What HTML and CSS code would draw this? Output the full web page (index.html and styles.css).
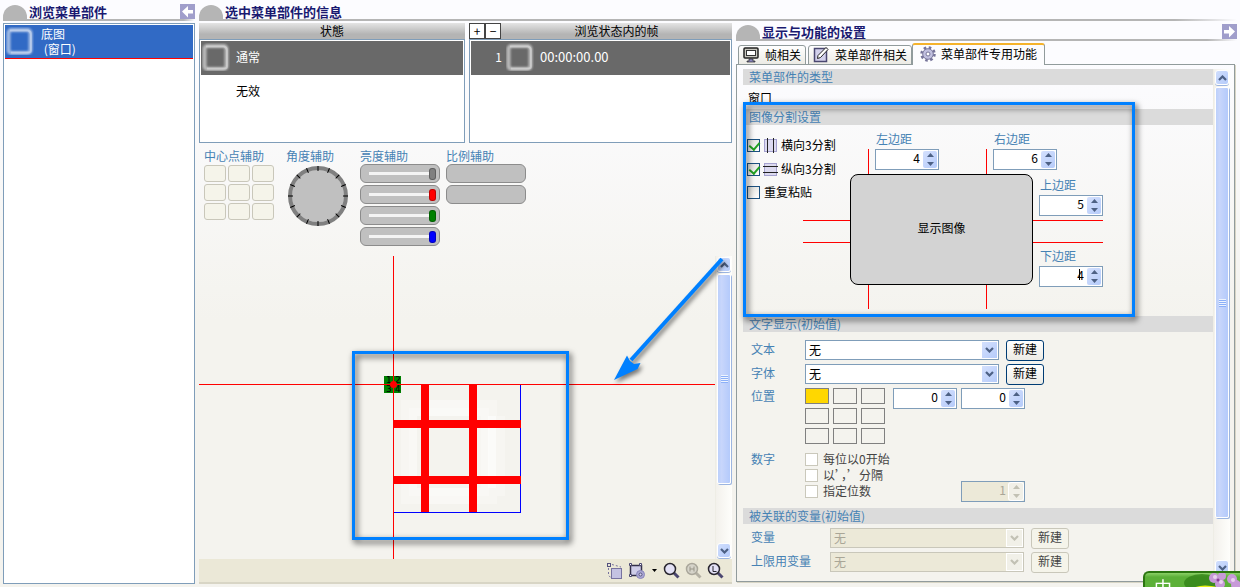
FILE: index.html
```html
<!DOCTYPE html>
<html lang="zh-CN">
<head>
<meta charset="utf-8">
<title>菜单部件编辑器</title>
<link rel="stylesheet" href="styles.css">
</head>
<body>
<svg class="defs" width="0" height="0" aria-hidden="true">
  <defs>
    <symbol id="chev-up" viewBox="0 0 9 6"><path d="M1 5 4.500 1.500 8 5" fill="none" stroke="#4d6185" stroke-width="2.200"/></symbol>
    <symbol id="chev-down" viewBox="0 0 9 6"><path d="M1 1 4.500 4.500 8 1" fill="none" stroke="currentColor" stroke-width="2.200"/></symbol>
    <symbol id="tri-up" viewBox="0 0 7 4"><path d="M0 4 3.500 0 7 4z" fill="currentColor"/></symbol>
    <symbol id="tri-down" viewBox="0 0 7 4"><path d="M0 0 3.500 4 7 0z" fill="currentColor"/></symbol>
    <filter id="soft" x="-20%" y="-20%" width="140%" height="140%"><feGaussianBlur stdDeviation="0.800"/></filter>
    <symbol id="frame-part" viewBox="0 0 28 28">
      <rect x="2.500" y="3" width="22" height="23" rx="3" fill="none" stroke="#fff" stroke-width="4" opacity=".55" filter="url(#soft)"/>
      <path d="M4 3.500h18q3 1 3 4v16q0 2-2 2H5" fill="none" stroke="#fff" stroke-width="2" opacity=".3"/>
    </symbol>
  </defs>
</svg>

<div class="app">
  <aside class="parts">
    <header class="head">
      <span class="dome"></span><h2>浏览菜单部件</h2>
      <button class="arrow" aria-label="收起"><svg width="15" height="15"><path d="M2 7.500 8 2v4h5v3.500H8v4z" fill="#fff"/></svg></button>
    </header>
    <ul class="list part-list">
      <li class="part selected"><svg width="28" height="28"><use href="#frame-part"/></svg><span>底图<br>&nbsp;(窗口)</span></li>
    </ul>
  </aside>

  <main class="detail">
    <header class="head"><span class="dome"></span><h2>选中菜单部件的信息</h2></header>
    <div class="columns">

      <section class="editor">
        <div class="lists">
          <div class="pane">
            <div class="caption">状態</div>
            <ul class="list">
              <li class="row active"><svg width="28" height="28"><use href="#frame-part"/></svg><span>通常</span></li>
              <li class="row"><i class="blank"></i><span>无效</span></li>
            </ul>
          </div>
          <div class="pane">
            <div class="caption"><span class="pm"><button>+</button><button>−</button></span><span class="title">浏览状态内的帧</span></div>
            <ul class="list">
              <li class="row active"><b class="num">1</b><svg width="28" height="28"><use href="#frame-part"/></svg><span class="time">00:00:00.00</span></li>
            </ul>
          </div>
        </div>

        <div class="aids">
          <div class="aid"><h3>中心点辅助</h3>
            <div class="centers"><button aria-label="左上"></button><button aria-label="上"></button><button aria-label="右上"></button><button aria-label="左"></button><button aria-label="中"></button><button aria-label="右"></button><button aria-label="左下"></button><button aria-label="下"></button><button aria-label="右下"></button></div>
          </div>
          <div class="aid angle"><h3>角度辅助</h3>
            <svg class="dial" width="60" height="60" viewBox="-30 -30 60 60">
              <circle r="28" fill="#c0c0c0" stroke="#808080" stroke-width="4"/>
              <g stroke="#000"><path id="tick" d="M0-30V-25M0 25V30M-30 0H-25M25 0H30"/><use href="#tick" transform="rotate(22.500)"/><use href="#tick" transform="rotate(45)"/><use href="#tick" transform="rotate(67.500)"/></g>
            </svg>
          </div>
          <div class="pair">
            <div class="aid"><h3>亮度辅助</h3>
              <div class="bars">
                <label class="bar gray"><input type="range" value="100" aria-label="亮度"></label>
                <label class="bar red"><input type="range" value="100" aria-label="红"></label>
                <label class="bar green"><input type="range" value="100" aria-label="绿"></label>
                <label class="bar blue"><input type="range" value="100" aria-label="蓝"></label>
              </div>
            </div>
            <div class="aid"><h3>比例辅助</h3><div class="bars"><div class="bar"></div><div class="bar"></div></div></div>
          </div>
        </div>

        <div class="stage">
          <svg class="scene">
            <g transform="translate(194 128)">
              <g fill="#fff">
                <path opacity=".25" d="M8 16h96v104H8zM24 32v72h64V32z" fill-rule="evenodd"/>
                <path opacity=".25" d="M16 24h80v88H16zM24 32v72h56V32z" fill-rule="evenodd"/>
                <path opacity=".5" d="M95 32h8v72h-8z"/>
                <path opacity=".25" d="M36 16h40v16H36zM36 104h40v16H36zM104 32h8v80h-8z"/>
              </g>
              <path d="M0 128.500H128M127.500 128V0" transform="translate(0 0)" fill="none" stroke="#00f"/>
              <path d="M28 0h8v128h-8zM76 0h8v128h-8zM0 36h128v8H0zM0 92h128v8H0z" fill="red"/>
              <rect x="-9" y="-8" width="17" height="17" fill="#008000"/>
              <g class="quad"><text x="-7" y="-1">1</text><text x="2" y="-1">2</text><text x="-7" y="8">3</text><text x="2" y="8">4</text></g>
            </g>
            <path d="M194.500 0V900M0 128.500H3000" stroke="red"/>
            <circle cx="194.500" cy="128.500" r="3.500" fill="red"/>
            <rect class="mark" x="154.500" y="96.500" width="214" height="186"/>
          </svg>
          <div class="scroll">
            <button aria-label="向上"><svg width="9" height="6"><use href="#chev-up"/></svg></button>
            <div class="track"><div class="thumb stage-thumb"></div><div class="rest stage-rest"></div></div>
            <button aria-label="向下"><svg width="9" height="6"><use href="#chev-down"/></svg></button>
          </div>
          <svg class="pointer" width="130" height="140"><path d="M118 3 27 104" stroke="#0080ff" stroke-width="4"/><path d="M10 124 23 99.500l3 5.500 4 3 6.500-1-3 6z" fill="#0080ff"/></svg>
        </div>

        <div class="toolbar">
          <button aria-label="移动"><svg width="18" height="18"><rect x="5.500" y="6.500" width="10" height="10" fill="#c4c2e2" stroke="#77729f"/><rect x="1.500" y="1.500" width="3" height="3" fill="none" stroke="#55527f"/><path d="M6 2.500 15 5M2.500 6V13L5 16" fill="none" stroke="#77729f" stroke-dasharray="2 2"/></svg></button>
          <button aria-label="变形"><svg width="18" height="18"><rect x="2.500" y="3.500" width="11" height="10" fill="#cfcde9" stroke="#33304a" stroke-width="1.500"/><g fill="#fff" stroke="#4a4770"><path d="M1.500 1.500h2v2h-2zM11.500 1.500h2v2h-2zM1.500 12.500h2v2h-2z"/></g><circle cx="12.500" cy="12.500" r="4" fill="#aaa7d3" stroke="#8a86bb"/><circle cx="12.500" cy="12.500" r="1.500" fill="#d8d6ee" stroke="#55527f"/></svg></button>
          <button class="drop" aria-label="更多"><svg width="5" height="3"><path d="M0 0h5L2.500 3z"/></svg></button>
          <button aria-label="缩放"><svg width="18" height="18"><path d="m10.500 10.500 5 5" stroke="#4b4770" stroke-width="3"/><circle cx="7" cy="7" r="5.500" fill="#e3e1f6" stroke="#29262f" stroke-width="1.500"/></svg></button>
          <button aria-label="半倍" disabled><svg width="18" height="18"><path d="m10.500 10.500 5 5" stroke="#b4b1a4" stroke-width="3"/><circle cx="7" cy="7" r="5.500" fill="#d6d4ca" stroke="#aaa79b" stroke-width="1.500"/><path d="M5 4.500v5M9 4.500v5M5 7h4" stroke="#989588"/></svg></button>
          <button aria-label="放大"><svg width="18" height="18"><path d="m10.500 10.500 5 5" stroke="#4b4770" stroke-width="3"/><circle cx="7" cy="7" r="5.500" fill="#e3e1f6" stroke="#29262f" stroke-width="1.500"/><path d="M6 4v5.500h3.500" fill="none" stroke="#29262f"/></svg></button>
        </div>
      </section>

      <section class="settings">
        <header class="head">
          <span class="dome"></span><h2>显示与功能的设置</h2>
          <button class="arrow" aria-label="展开"><svg width="15" height="15"><path d="M13 7.500 7 2v4H2v3.500h5v4z" fill="#fff"/></svg></button>
        </header>
        <nav class="tabs">
          <button class="tab"><svg width="16" height="16"><rect x="1" y="1" width="14" height="10" rx="1" fill="#c9c8c0" stroke="#222" stroke-width="1.500"/><rect x="3.500" y="3.500" width="9" height="5" fill="#fff" stroke="#333"/><path d="M6 12h4v2h2v1H4v-1h2z" fill="#8c88c2" stroke="#222" stroke-width=".7"/></svg>帧相关</button>
          <button class="tab"><svg width="16" height="16"><rect x="1.500" y="1.500" width="12" height="13" fill="#d3d1ec" stroke="#4a4770" stroke-width="1.500"/><path d="m5 8.500 8-8 2 2-7.500 8-3 1z" fill="#fff" stroke="#222"/></svg>菜单部件相关</button>
          <button class="tab current"><svg width="16" height="16" viewBox="-8 -8 16 16"><circle r="6.500" fill="none" stroke="#77759a" stroke-width="2.500" stroke-dasharray="2.550 2.550"/><circle r="5.300" fill="#c1c0df" stroke="#77759a"/><circle r="2" fill="#fff" stroke="#77759a"/></svg>菜单部件专用功能</button>
        </nav>
        <div class="sheet">
          <div class="form">
            <section>
              <h3 class="band">菜单部件的类型</h3>
              <p class="kind">窗口</p>
            </section>

            <section class="split">
              <h3 class="band">图像分割设置</h3>
              <div class="split-body">
                <div class="checks">
                  <label><input type="checkbox" checked><svg width="15" height="15"><rect x="1.500" y="1.500" width="12" height="12" fill="#dcdaf0" stroke="#a5a2cf"/><path d="M4.500 0v15M10.500 0v15" stroke="#222"/></svg>横向3分割</label>
                  <label><input type="checkbox" checked><svg width="15" height="15"><rect x="1.500" y="1.500" width="12" height="12" fill="#dcdaf0" stroke="#a5a2cf"/><path d="M0 4.500h15M0 10.500h15" stroke="#222"/></svg>纵向3分割</label>
                  <label class="plain"><input type="checkbox"><span>重复粘贴</span></label>
                  <div class="lead"></div>
                </div>
                <div class="diagram">
                  <div class="above">
                    <div class="field"><label for="ml">左边距</label><span class="spin"><input id="ml" value="4"><span class="steps"><button aria-label="加"><svg width="7" height="4"><use href="#tri-up"/></svg></button><button aria-label="减"><svg width="7" height="4"><use href="#tri-down"/></svg></button></span></span></div>
                    <div class="field"><label for="mr">右边距</label><span class="spin"><input id="mr" value="6"><span class="steps"><button aria-label="加"><svg width="7" height="4"><use href="#tri-up"/></svg></button><button aria-label="减"><svg width="7" height="4"><use href="#tri-down"/></svg></button></span></span></div>
                  </div>
                  <div class="preview">显示图像</div>
                  <div class="beside">
                    <div class="field"><label for="mt">上边距</label><span class="spin"><input id="mt" value="5"><span class="steps"><button aria-label="加"><svg width="7" height="4"><use href="#tri-up"/></svg></button><button aria-label="减"><svg width="7" height="4"><use href="#tri-down"/></svg></button></span></span></div>
                    <div class="field"><label for="mb">下边距</label><span class="spin editing"><input id="mb" value="4"><span class="steps"><button aria-label="加"><svg width="7" height="4"><use href="#tri-up"/></svg></button><button aria-label="减"><svg width="7" height="4"><use href="#tri-down"/></svg></button></span></span></div>
                  </div>
                </div>
              </div>
              <div class="highlight"></div>
            </section>

            <section class="text">
              <h3 class="band">文字显示(初始值)</h3>
              <div class="line"><label class="name" for="txt">文本</label><span class="combo"><select id="txt"><option>无</option></select><i><svg width="9" height="6"><use href="#chev-down"/></svg></i></span><button class="new">新建</button></div>
              <div class="line"><label class="name" for="fnt">字体</label><span class="combo"><select id="fnt"><option>无</option></select><i><svg width="9" height="6"><use href="#chev-down"/></svg></i></span><button class="new">新建</button></div>
              <div class="place">
                <span class="name">位置</span>
                <div class="anchors"><button class="on" aria-label="左上"></button><button aria-label="上"></button><button aria-label="右上"></button><button aria-label="左"></button><button aria-label="中"></button><button aria-label="右"></button><button aria-label="左下"></button><button aria-label="下"></button><button aria-label="右下"></button></div>
                <span class="spin"><input value="0" aria-label="X"><span class="steps"><button aria-label="加"><svg width="7" height="4"><use href="#tri-up"/></svg></button><button aria-label="减"><svg width="7" height="4"><use href="#tri-down"/></svg></button></span></span>
                <span class="spin"><input value="0" aria-label="Y"><span class="steps"><button aria-label="加"><svg width="7" height="4"><use href="#tri-up"/></svg></button><button aria-label="减"><svg width="7" height="4"><use href="#tri-down"/></svg></button></span></span>
              </div>
              <div class="digits">
                <span class="name">数字</span>
                <div class="options">
                  <label><input type="checkbox" disabled>每位以0开始</label>
                  <label><input type="checkbox" disabled>以’，’分隔</label>
                  <label><input type="checkbox" disabled>指定位数</label>
                </div>
                <span class="spin off"><input value="1" aria-label="位数" disabled><span class="steps"><button aria-label="加" disabled><svg width="7" height="4"><use href="#tri-up"/></svg></button><button aria-label="减" disabled><svg width="7" height="4"><use href="#tri-down"/></svg></button></span></span>
              </div>
            </section>

            <section class="vars">
              <h3 class="band">被关联的变量(初始值)</h3>
              <div class="line"><label class="name" for="var">变量</label><span class="combo off"><select id="var" disabled><option>无</option></select><i><svg width="9" height="6"><use href="#chev-down"/></svg></i></span><button class="new" disabled>新建</button></div>
              <div class="line"><label class="name" for="lim">上限用变量</label><span class="combo off"><select id="lim" disabled><option>无</option></select><i><svg width="9" height="6"><use href="#chev-down"/></svg></i></span><button class="new" disabled>新建</button></div>
            </section>
          </div>
          <div class="scroll">
            <button aria-label="向上"><svg width="9" height="6"><use href="#chev-up"/></svg></button>
            <div class="track"><div class="thumb sheet-thumb"></div><div class="rest sheet-rest"></div></div>
            <button aria-label="向下"><svg width="9" height="6"><use href="#chev-down"/></svg></button>
          </div>
        </div>
      </section>
    </div>
  </main>
</div>

<div class="ime"><span>中</span>
  <svg width="60" height="16"><ellipse cx="22" cy="10" rx="18" ry="9" fill="#2c7d12" opacity=".7"/><path d="M12 16q8-6 26-2v2z" fill="#e8f01a"/><path d="M38 2l4 8-6 4z" fill="#3f9a20"/><g fill="#c79ad8"><circle cx="34" cy="5" r="5"/><circle cx="42" cy="3" r="4"/><circle cx="40" cy="11" r="5"/><circle cx="52" cy="6" r="5"/><circle cx="56" cy="12" r="5"/></g><g fill="#ead2f0"><circle cx="35" cy="4" r="2"/><circle cx="41" cy="9" r="2"/><circle cx="53" cy="7" r="2"/></g><circle cx="38" cy="7" r="1.500" fill="#8b3f9b"/></svg>
</div>
</body>
</html>
```

FILE: styles.css
```css
* { box-sizing: border-box; }

body {
  margin: 0;
  min-height: 100vh;
  font: 12px/16px "Noto Sans CJK SC", "Liberation Sans", sans-serif;
  color: #000;
  background: linear-gradient(#fcfcff, #fcfcff 60px, #f4f3ee 320px);
}

h2, h3, p, ul { margin: 0; padding: 0; font-size: inherit; font-weight: normal; list-style: none; }
button, input, select { font: inherit; margin: 0; padding: 0; color: inherit; }
svg { display: block; flex: none; }
.defs { position: absolute; }

.app { display: flex; gap: 4px; min-height: 100vh; padding: 4px 3px 3px; }
.parts { display: flex; flex-direction: column; gap: 2px; flex: none; width: 192px; }
.detail { display: flex; flex-direction: column; gap: 2px; flex: 1; min-width: 0; }
.columns { display: grid; grid-template-columns: minmax(0, 533fr) minmax(0, 501fr); gap: 4px; flex: 1; }

/* section titles */
.head {
  display: flex;
  align-items: flex-start;
  height: 17px;
  background: linear-gradient(90deg, #b5b5b5 94%, transparent) 0 100% / 100% 2px no-repeat;
}
.dome { width: 24px; height: 14px; margin-top: 1px; background: #b5b5b5; border-radius: 12px 12px 0 0; }
.head h2 { flex: 1; padding-left: 2px; font-size: 13px; font-weight: bold; color: #191970; }
.arrow { width: 15px; height: 15px; border: 0; background: #a09ecb; }

.list { flex: 1; padding: 1px; border: 1px solid #7f9db9; background: #fff; }
.part { display: flex; gap: 7px; align-items: center; height: 34px; padding: 0 0 2px 1px; line-height: 15px; }
.part.selected { color: #fff; background: #316ac5; border-bottom: 1px solid #f00; }

.editor { display: flex; flex-direction: column; min-width: 0; }
.lists { display: grid; grid-template-columns: 266fr 263fr; gap: 4px; height: 120px; }
.pane { display: flex; flex-direction: column; }
.caption { display: grid; place-items: center; height: 16px; line-height: 14px; background: linear-gradient(#e4e4e4, #b4b4b4 70%); }
.caption > * { grid-area: 1 / 1; }
.caption .title { padding-left: 32px; }
.pm { display: flex; justify-self: start; }
.pm button { width: 16px; height: 16px; border: 1px solid #444; background: #fff; line-height: 12px; }
.row { display: flex; align-items: center; gap: 6px; height: 34px; padding: 0 0 2px 1px; }
.row.active { color: #fff; background: #696969; }
.row .blank { width: 28px; }
.row .num { width: 30px; font-weight: normal; text-align: right; margin-right: -2px; }
.time { font-size: 13px; }

/* aids */
.aids { display: flex; gap: 12px; padding: 5px 0 10px 5px; }
.aid h3 { color: #4682b4; white-space: nowrap; }
.centers { display: grid; grid-template-columns: repeat(3, 22px); grid-auto-rows: 17px; gap: 2px; padding-top: 1px; }
.centers button { border: 1px solid #c9c7ba; border-radius: 3px; background: #f5f4ea; }
.dial { margin: 2px 0 0 2px; }
.pair { display: flex; gap: 6px; }
.bars { display: grid; gap: 2px; }
.bar { display: flex; align-items: center; width: 80px; height: 19px; padding: 0 3px 0 8px; border: 1px solid #8c8c8c; border-radius: 6px; background: #c0c0c0; }
.bar input { appearance: none; width: 100%; height: 13px; background: linear-gradient(#f4f4f4, #f4f4f4) 0 50% / 100% 3px no-repeat; }
.bar input::-webkit-slider-thumb { appearance: none; width: 7px; height: 12px; border: 1px solid rgba(0, 0, 0, .25); border-radius: 3px; background: var(--knob); }
.gray { --knob: #808080; }
.red { --knob: #f00; }
.green { --knob: #008000; }
.blue { --knob: #00f; }

/* stage */
.stage { position: relative; display: flex; flex: 1; min-height: 303px; }
.scene { flex: 1; width: 0; height: auto; overflow: hidden; }
.quad { font: 9px "DejaVu Sans", sans-serif; }
.mark { fill: none; stroke: #0080ff; stroke-width: 3; filter: drop-shadow(2px 3px 3px rgba(0, 0, 0, .75)); }
.pointer { position: absolute; right: -2px; top: 0; filter: drop-shadow(2px 3px 2px rgba(0, 0, 0, .5)); pointer-events: none; }

.scroll { display: flex; flex-direction: column; flex: none; width: 17px; padding: 1px; border-left: 1px solid #eeede5; background: linear-gradient(90deg, #f3f1ec, #fefefb); }
.scroll button { display: grid; place-items: center; height: 15px; border: 1px solid #fff; border-radius: 3px; color: #4d6185; background: linear-gradient(135deg, #d0defd, #b5cbfa); box-shadow: 0 1px #9cb5e0; }
.track { display: flex; flex-direction: column; gap: 1px; flex: 1; padding: 2px 0; }
.thumb { border: 1px solid #fff; border-radius: 2px; background: linear-gradient(90deg, #bcd0fb, #c8d6fb 30%, #b4cafb); box-shadow: 1px 1px #9cb5e0; display: grid; place-items: center; }
.thumb::after { content: ""; width: 7px; height: 8px; background: repeating-linear-gradient(#eef4fe 0 1px, #8cb0f8 1px 2px); }
.stage-thumb { flex: 211; }
.stage-rest { flex: 57; }
.sheet-thumb { flex: 432; }
.sheet-rest { flex: 39; }

.toolbar { display: flex; justify-content: flex-end; align-items: center; gap: 4px; height: 25px; padding-right: 7px; background: #ebe8d7; border-bottom: 2px solid #d8d5c5; }
.toolbar button { border: 0; background: none; }
.toolbar .drop { margin: 0 2px; }

/* settings */
.settings { display: flex; flex-direction: column; margin: 1px 0 2px; min-width: 0; }
.tabs { display: flex; align-items: flex-end; height: 22px; margin-top: 2px; padding-left: 2px; position: relative; white-space: nowrap; }
.tab { display: flex; align-items: center; gap: 6px; height: 20px; padding: 0 4px; margin-right: 2px; border: 1px solid #919b9c; border-radius: 3px 3px 0 0; background: linear-gradient(#fff, #ecebe5); }
.tab.current { height: 22px; margin-left: -2px; padding: 0 7px 2px; gap: 5px; border-top: 2px solid #f5b32c; border-bottom: 0; background: #fcfcfe; }
.sheet { display: flex; flex: 1; margin: -1px 2px 0 0; padding: 4px 4px 5px 6px; border: 1px solid #919b9c; box-shadow: 1px 1px #d8d5c5; }
.form { flex: 1; min-width: 0; }
.band { height: 16px; padding-left: 6px; line-height: 15px; color: #4682b4; background: #dbdbdb; }
.kind { padding: 5px 5px 3px; }

.split { position: relative; }
.split-body { display: flex; height: 191px; padding: 6px 0 0 4px; }
.highlight { position: absolute; left: 0; top: -7px; bottom: -1px; width: 392px; border: 3px solid #0080ff; filter: drop-shadow(2px 3px 3px rgba(0, 0, 0, .75)); pointer-events: none; }
.checks { width: 103px; padding-top: 2px; }
.checks label { display: flex; align-items: center; gap: 3px; height: 24px; line-height: 14px; white-space: nowrap; }
.checks .plain { gap: 4px; height: 22px; }
.lead { width: 47px; height: 23px; margin: 17px 0 0 auto; border: solid #f00; border-width: 1px 0; }

input[type="checkbox"] { appearance: none; flex: none; width: 13px; height: 13px; border: 1px solid #1c5180; background: linear-gradient(135deg, #dcdcd7, #fff); position: relative; }
input[type="checkbox"]:checked::after { content: ""; position: absolute; left: 3px; top: 0; width: 5px; height: 8px; border: solid #21a121; border-width: 0 2px 2px 0; transform: rotate(40deg); }
input[type="checkbox"]:disabled { border-color: #cac8bb; background: #fff; }

.diagram {
  display: grid;
  grid-template: 43px 111px 24px / 183px 70px;
  align-content: start;
  background:
    linear-gradient(#f00, #f00) 18px 18px / 1px 160px no-repeat,
    linear-gradient(#f00, #f00) 136px 18px / 1px 160px no-repeat,
    linear-gradient(#f00, #f00) 0 89px / 100% 1px no-repeat,
    linear-gradient(#f00, #f00) 0 111px / 100% 1px no-repeat;
}
.above { grid-column: 1 / 3; display: flex; gap: 54px; padding-left: 25px; }
.preview { display: grid; place-items: center; padding-bottom: 4px; border: 1px solid #000; border-radius: 8px; background: #d3d3d3; }
.beside { grid-row: 2 / 4; grid-column: 2; display: flex; flex-direction: column; gap: 32px; padding: 3px 0 0 6px; }
.field { display: flex; flex-direction: column; gap: 3px; width: 64px; }
.field label { padding-left: 1px; line-height: 15px; color: #4682b4; }

.spin { display: flex; flex: none; width: 64px; height: 21px; padding: 1px; border: 1px solid #7f9db9; background: #fff; }
.spin input { flex: 1; width: 0; height: 14px; padding-right: 3px; border: 0; outline: 0; text-align: right; background: none; }
.editing input { background: linear-gradient(#000, #000) 38px 1px / 1px 11px no-repeat; }
.steps { display: grid; width: 14px; border-radius: 2px; color: #4d6185; background: linear-gradient(135deg, #d4e0fd, #b5cbfa); }
.steps button { display: grid; place-items: center; border: 0; background: none; }
.spin.off { background: #ece9d8; }
.off input { color: #a9a697; }
.off .steps, .off i { color: #c2c1b4; background: #f1f0e8; box-shadow: 0 0 0 1px #fff; }

.text { padding-bottom: 6px; }
.name { flex: none; width: 54px; color: #4682b4; white-space: nowrap; }
.vars .name { width: 79px; }
.line { display: flex; align-items: center; height: 24px; padding-left: 8px; }
.line .name { padding-bottom: 2px; }
.band + .line { margin-top: 6px; }
.vars .band + .line { margin-top: 2px; }
.combo { position: relative; width: 194px; margin-right: 7px; }
.combo select { display: block; appearance: none; width: 100%; height: 20px; padding-left: 3px; border: 1px solid #7f9db9; border-radius: 0; background: #fff; }
.combo i { position: absolute; right: 2px; top: 2px; display: grid; place-items: center; width: 15px; height: 16px; color: #4d6185; background: linear-gradient(135deg, #d4e0fd, #b5cbfa); pointer-events: none; }
.combo.off select { opacity: 1; color: #a9a697; border-color: #c9c7ba; background: #ece9d8; }
.combo.off i { color: #c2c1b4; background: #f1f0e8; }
.new { width: 38px; height: 21px; padding-bottom: 2px; border: 1px solid #003c74; border-radius: 3px; background: linear-gradient(#fff, #ecebe5); }
.new:disabled { color: #444; border-color: #c9c7ba; background: #f5f4ea; }

.place { display: flex; gap: 4px; height: 58px; padding: 2px 0 0 8px; }
.place .name { width: 50px; }
.anchors { display: grid; grid-template-columns: repeat(3, 24px); grid-auto-rows: 16px; gap: 4px; margin-right: 4px; }
.anchors button { border: 1px solid #808080; background: none; }
.anchors .on { background: #ffd700; }
.digits { display: flex; align-items: flex-end; height: 51px; margin-top: 7px; padding-left: 8px; }
.digits .name { align-self: flex-start; }
.options { align-self: flex-start; width: 156px; color: #444; }
.options label { display: flex; align-items: center; gap: 5px; height: 16px; }

/* input-method bar */
.ime { position: fixed; right: 0; bottom: 0; display: flex; justify-content: space-between; width: 97px; height: 16px; padding-left: 9px; overflow: hidden; border: solid #2b7510; border-width: 2px 0 0 2px; border-radius: 6px 0 0 0; color: #fff; background: linear-gradient(#8bd066, #5cb038 4px); font-size: 18px; line-height: 28px; }
```
